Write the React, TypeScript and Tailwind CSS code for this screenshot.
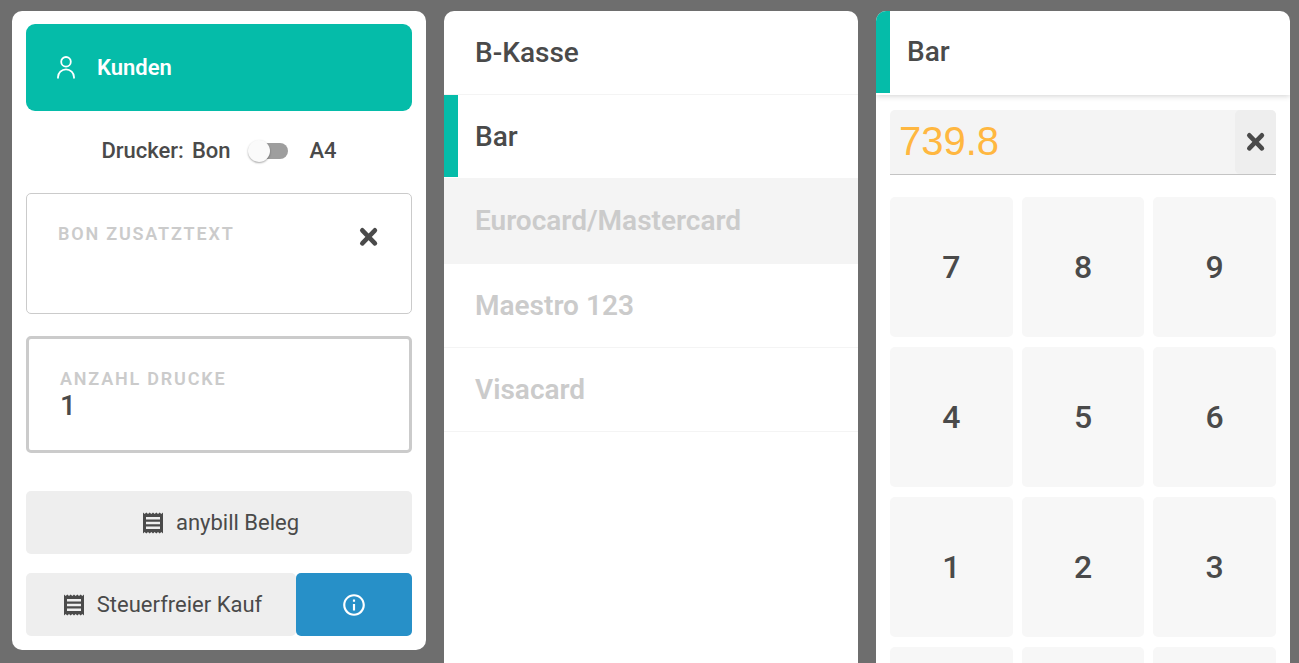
import { useState } from "react";
import { MdOutlineInfo } from "react-icons/md";

const payments = [
  { name: "B-Kasse", disabled: false },
  { name: "Bar", disabled: false },
  { name: "Eurocard/Mastercard", disabled: true },
  { name: "Maestro 123", disabled: true },
  { name: "Visacard", disabled: true },
];

const keys = ["7", "8", "9", "4", "5", "6", "1", "2", "3", "0", "00", "."];

function CrossIcon() {
  return (
    <svg width="20" height="20" viewBox="0 0 20 20" fill="none" stroke="currentColor" strokeWidth="4.6" strokeLinecap="round" aria-hidden="true">
      <path d="M3.3 3.3l12.6 13M15.9 3.3l-12.6 13" />
    </svg>
  );
}

function PersonIcon() {
  return (
    <svg width="20" height="24" viewBox="0 0 20 24" fill="none" stroke="currentColor" strokeWidth="1.8" strokeLinecap="round" aria-hidden="true">
      <circle cx="10" cy="5.8" r="4.8" />
      <path d="M2 21.8v-.6a8 7.8 0 0 1 16 0v.6" />
    </svg>
  );
}

function ReceiptIcon() {
  return (
    <svg width="20" height="22" viewBox="0 0 20 22" fill="currentColor" aria-hidden="true">
      <path
        fillRule="evenodd"
        d="M0 .4l1.67 1.5L3.33.4 5 1.9 6.67.4l1.66 1.5L10 .4l1.67 1.5L13.33.4 15 1.9 16.67.4l1.66 1.5L20 .4v21.2l-1.67-1.5-1.66 1.5-1.67-1.5-1.67 1.5-1.66-1.5-1.67 1.5-1.67-1.5-1.66 1.5L5 20.1l-1.67 1.5-1.66-1.5L0 21.6zM3 5v2.4h14V5zm0 4.8v2.4h14V9.800zm0 4.8V17h14v-2.400z"
      />
    </svg>
  );
}

export default function App() {
  const [a4, setA4] = useState(false);
  const [note, setNote] = useState("");
  const [copies, setCopies] = useState("1");
  const [selected, setSelected] = useState("Bar");
  const [amount, setAmount] = useState("739.8");

  return (
    <main className="grid h-screen grid-cols-3 items-start gap-[18px] overflow-hidden bg-[#6e6e6e] pt-[11px] pr-[9px] pl-3 font-['Roboto',sans-serif] text-[#4a4a4a]">
      {/* Options */}
      <section className="rounded-[10px] bg-white px-3.5 pt-[13px] pb-3.5">
        <button className="flex h-[87px] w-full items-center gap-[21px] rounded-[9px] bg-[#05bca9] px-[30px] text-[22px] font-semibold text-white">
          <PersonIcon />
          Kunden
        </button>

        <div className="flex h-[82px] items-center justify-center pb-[3px] text-[22px] font-medium">
          <span className="mr-2">Drucker:</span>
          <label className="flex items-center">
            Bon
            <input
              type="checkbox"
              className="peer sr-only"
              checked={a4}
              onChange={(e) => setA4(e.target.checked)}
            />
            <span className="ml-[17px] flex h-4 w-10 items-center rounded-full bg-[#9e9e9e] bg-clip-content pl-1 peer-checked:justify-end">
              <span className="-ml-1 size-[22px] shrink-0 rounded-full bg-[#fafafa] shadow-[0_1px_2px_rgba(0,0,0,0.35)]" />
            </span>
            <span className="ml-[22px]">A4</span>
          </label>
        </div>

        <div className="flex h-[121px] items-start justify-between rounded-[5px] border border-[#cbcbcb] pt-[30px] pr-8 pl-[31px]">
          <textarea
            aria-label="Bon Zusatztext"
            placeholder="BON ZUSATZTEXT"
            rows={2}
            value={note}
            onChange={(e) => setNote(e.target.value)}
            className="min-w-0 flex-1 resize-none bg-transparent text-lg leading-5 font-semibold tracking-widest outline-none placeholder:text-[#cbcbcb]"
          />
          <button aria-label="Text löschen" className="mt-[3px]" onClick={() => setNote("")}>
            <CrossIcon />
          </button>
        </div>

        <div className="mt-[22px] flex h-[117px] flex-col rounded-[5px] border-3 border-[#cbcbcb] px-[31px] pt-[30px]">
          <label htmlFor="copies" className="text-lg leading-5 font-semibold tracking-widest text-[#cbcbcb]">
            ANZAHL DRUCKE
          </label>
          <input
            id="copies"
            value={copies}
            onChange={(e) => setCopies(e.target.value)}
            className="h-[34px] w-full bg-transparent text-[28px] font-medium outline-none"
          />
        </div>

        <button className="mt-[38px] flex h-[63px] w-full items-center justify-center gap-[13px] rounded-[5px] bg-[#eee] pl-1 text-[22px]">
          <ReceiptIcon />
          anybill Beleg
        </button>

        <div className="mt-[19px] flex h-[63px]">
          <button className="flex flex-1 items-center justify-center gap-[13px] rounded-[5px] bg-[#eee] pl-1 text-[22px]">
            <ReceiptIcon />
            Steuerfreier Kauf
          </button>
          <button aria-label="Info" className="flex w-[116px] items-center justify-center rounded-[5px] bg-[#2790c8] text-white">
            <MdOutlineInfo size={26} />
          </button>
        </div>
      </section>

      {/* Payment methods */}
      <section className="self-stretch rounded-t-[10px] bg-white">
        <ul>
          {payments.map((p) => (
            <li key={p.name} className="border-b border-[#f4f4f4]">
              <button
                disabled={p.disabled}
                onClick={() => setSelected(p.name)}
                className={
                  "flex w-full items-start text-left text-[28px] " +
                  (p.disabled ? "font-semibold text-[#cbcbcb] " : "font-medium ") +
                  (p.name === "Eurocard/Mastercard" ? "h-[84px] bg-[#f4f4f4]" : "h-[83px]")
                }
              >
                <span className={"mr-[17px] h-[82px] w-3.5 " + (p.name === selected ? "bg-[#05bca9]" : "")} />
                <span className="leading-[84px]">{p.name}</span>
              </button>
            </li>
          ))}
        </ul>
      </section>

      {/* Amount */}
      <section className="flex min-h-0 flex-col self-stretch overflow-hidden rounded-t-[10px] bg-white">
        <h2 className="flex h-[84px] shrink-0 items-start text-[28px] font-medium shadow-[0_1px_6px_rgba(0,0,0,0.18)]">
          <span className="mr-[17px] h-[82px] w-3.5 bg-[#05bca9]" />
          <span className="leading-[82px]">{selected}</span>
        </h2>
        <div className="px-3.5 pt-[15px]">
          <div className="flex h-[65px] rounded-t-[5px] border-b border-[#c4c4c4] bg-[#f4f4f4]">
            <input
              aria-label="Betrag"
              value={amount}
              onChange={(e) => setAmount(e.target.value)}
              className="min-w-0 flex-1 bg-transparent px-[9px] pb-0.5 font-['Liberation_Sans',sans-serif] text-[40px] text-[#ffb740] outline-none"
            />
            <button
              aria-label="Betrag löschen"
              onClick={() => setAmount("")}
              className="flex w-[41px] items-center justify-center rounded-[5px] bg-[#eee]"
            >
              <CrossIcon />
            </button>
          </div>
        </div>
        <div className="mt-[22px] grid min-h-0 flex-1 grid-cols-3 gap-x-[9px] gap-y-2.5 overflow-y-auto px-3.5 [scrollbar-width:none]">
          {keys.map((key) => (
            <button
              key={key}
              onClick={() => setAmount(amount + key)}
              className="h-[140px] rounded-[5px] bg-[#f7f7f7] text-[32px] font-medium"
            >
              {key}
            </button>
          ))}
        </div>
      </section>
    </main>
  );
}
